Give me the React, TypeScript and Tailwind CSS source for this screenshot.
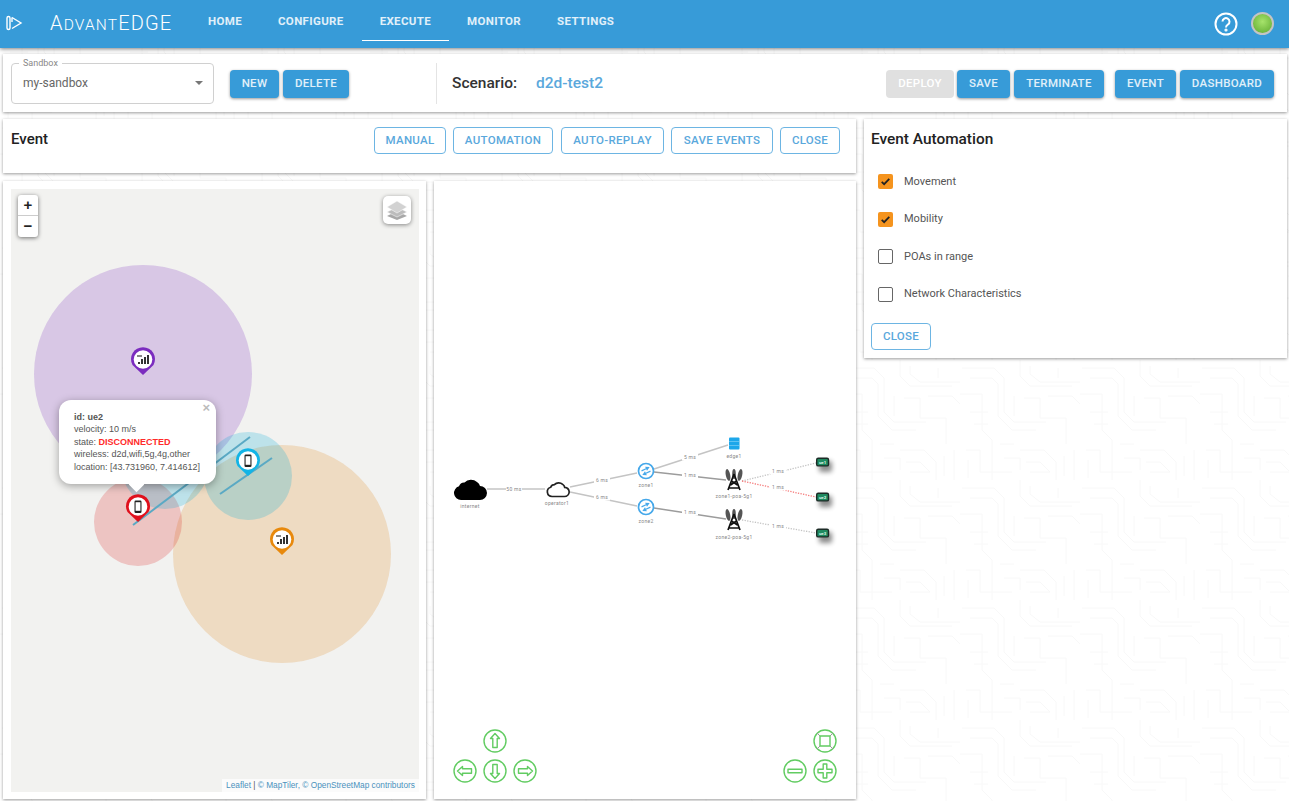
function Solid({ label, className = "" }: { label: string; className?: string }) {
  return (
    <button className={`h-[28px] rounded-[4px] bg-[#379bd8] text-[11.5px] font-medium tracking-[0.3px] text-white/85 shadow-[0_1px_3px_rgba(0,0,0,0.4)] ${className}`}>
      {label}
    </button>
  );
}

function Outline({ label, className = "" }: { label: string; className?: string }) {
  return (
    <button className={`h-[27px] rounded-[4px] border border-[#6db5e3] bg-white text-[11.5px] font-medium tracking-[0.3px] text-[#5aa8dc] ${className}`}>
      {label}
    </button>
  );
}

function Check({ label, on }: { label: string; on?: boolean }) {
  return (
    <div className="flex h-[37.5px] items-center">
      <span className={`mr-[11px] ml-[7px] flex h-[15px] w-[15px] items-center justify-center rounded-[2px] ${on ? "bg-[#f5941e]" : "border border-[#666] bg-white"}`}>
        {on && (
          <svg viewBox="0 0 24 24" className="h-[13px] w-[13px]" fill="none" stroke="#222" strokeWidth="3.2">
            <path d="M5 12.5l4.5 4.5L19 7" />
          </svg>
        )}
      </span>
      <span className="text-[11px] text-[#555]">{label}</span>
    </div>
  );
}

function Pin({ x, y, color, kind }: { x: number; y: number; color: string; kind: "phone" | "signal" }) {
  return (
    <g>
      <path d={`M${x - 10.5} ${y + 5} A12 12 0 1 1 ${x + 10.5} ${y + 5} L${x} ${y + 15} Z`} fill={color} />
      <circle cx={x} cy={y - 0.5} r="9.3" fill="white" />
      {kind === "phone" ? (
        <g>
          <rect x={x - 3.5} y={y - 6.5} width="7" height="12.5" rx="1.2" fill="#222" />
          <rect x={x - 2.4} y={y - 4.8} width="4.8" height="8.6" fill="white" />
        </g>
      ) : (
        <g fill="#333">
          <rect x={x - 5} y={y + 2} width="2" height="2" />
          <rect x={x - 2} y={y - 1} width="2" height="5" />
          <rect x={x + 1} y={y - 3} width="2" height="7" />
          <rect x={x + 4} y={y - 5} width="2" height="9" />
          <rect x={x - 6} y={y - 5} width="5" height="2" fill="#888" />
        </g>
      )}
    </g>
  );
}

function MapCanvas() {
  return (
    <svg viewBox="11 189 408 603" className="absolute inset-0 h-full w-full">
      <rect x="11" y="189" width="408" height="603" fill="#f2f2f0" />
      <circle cx="143" cy="374" r="109" fill="#7b2cbf" fillOpacity="0.22" />
      <circle cx="282" cy="554" r="109" fill="#e08a1e" fillOpacity="0.22" />
      <circle cx="138" cy="522" r="44" fill="#dc2020" fillOpacity="0.22" />
      <circle cx="165" cy="465" r="44" fill="#00a8d8" fillOpacity="0.22" />
      <circle cx="248" cy="476" r="44" fill="#00a8d8" fillOpacity="0.22" />
      <path d="M133 525L250 437" stroke="#5aa9c4" strokeWidth="2" />
      <path d="M220 494L272 458" stroke="#5aa9c4" strokeWidth="2" />
      <Pin x={143} y={360} color="#7b2cbf" kind="signal" />
      <Pin x={282} y={540} color="#e8890c" kind="signal" />
      <Pin x={248} y={461} color="#12b4e6" kind="phone" />
      <Pin x={138} y={507} color="#e0101c" kind="phone" />
    </svg>
  );
}

function Popup() {
  return (
    <div className="absolute left-[48px] top-[211px] h-[84px] w-[157px] rounded-[12px] bg-white pl-[15px] pt-[11px] text-[9px] leading-[12.4px] text-[#555] shadow-[0_2px_8px_rgba(0,0,0,0.35)] [font-family:'Liberation_Sans',sans-serif]">
      <span className="absolute right-[6px] top-[1px] text-[13px] font-bold leading-[14px] text-[#bbb]">×</span>
      <div className="font-bold">id: ue2</div>
      <div>velocity: 10 m/s</div>
      <div>
        state: <span className="font-bold text-[#ff2a2a]">DISCONNECTED</span>
      </div>
      <div>wireless: d2d,wifi,5g,4g,other</div>
      <div>location: [43.731960, 7.414612]</div>
      <span className="absolute left-[72px] top-[79px] h-[11px] w-[11px] rotate-45 bg-white" />
    </div>
  );
}

function Label({ x, y, children, bg }: { x: number; y: number; children: string; bg?: boolean }) {
  return (
    <g>
      {bg && <rect x={x - 8} y={y - 3.5} width="16" height="7" fill="white" />}
      <text x={x} y={y + 1.8} textAnchor="middle" fontSize="5" fill="#888" letterSpacing="0.3">
        {children}
      </text>
    </g>
  );
}

function Tower({ x, y }: { x: number; y: number }) {
  return (
    <g>
      <g fill="#555">
        <ellipse cx={x - 6} cy={y - 5} rx="2.2" ry="6" transform={`rotate(-12 ${x - 6} ${y - 5})`} />
        <ellipse cx={x + 6} cy={y - 5} rx="2.2" ry="6" transform={`rotate(12 ${x + 6} ${y - 5})`} />
        <ellipse cx={x} cy={y - 6} rx="1.8" ry="5" />
      </g>
      <path
        d={`M${x} ${y - 6}L${x - 6} ${y + 10}M${x} ${y - 6}L${x + 6} ${y + 10}M${x - 2.5} ${y + 1}L${x + 3.5} ${y + 5}M${x + 2.5} ${y + 1}L${x - 3.5} ${y + 5}M${x - 5} ${y + 8}L${x + 5} ${y + 8}`}
        stroke="#111"
        strokeWidth="1.7"
        fill="none"
      />
    </g>
  );
}

function Zone({ x, y }: { x: number; y: number }) {
  return (
    <g>
      <circle cx={x} cy={y} r="7.5" fill="white" stroke="#45a8ea" strokeWidth="1.7" />
      <g transform={`rotate(-25 ${x} ${y})`}>
        <path d={`M${x - 4} ${y - 2}H${x + 1}M${x + 4} ${y + 2}H${x - 1}`} stroke="#45a8ea" strokeWidth="1.3" />
        <path d={`M${x + 5} ${y - 2}L${x + 1} ${y - 4.2}V${y + 0.2}ZM${x - 5} ${y + 2}L${x - 1} ${y + 4.2}V${y - 0.2}Z`} fill="#45a8ea" />
      </g>
    </g>
  );
}

function Ue({ y, name }: { y: number; name: string }) {
  return (
    <g>
      <rect x="819" y={y - 1} width="13" height="11" rx="2" fill="#000" opacity="0.45" filter="url(#ue-shadow)" />
      <rect x="816.7" y={y - 3.7} width="11.8" height="7.6" rx="1.5" fill="#1f8a5f" stroke="#1c2b26" strokeWidth="1.4" />
      <text x="822.6" y={y + 1.6} textAnchor="middle" fontSize="4.4" fontWeight="700" fill="#d8f5e6">
        {name}
      </text>
    </g>
  );
}

function Ctrl({ x, y, d }: { x: number; y: number; d: string }) {
  return (
    <g fill="none" stroke="#62cc62" strokeWidth="1.4">
      <circle cx={x} cy={y} r="11" fill="white" />
      <path d={d} transform={`translate(${x} ${y})`} strokeLinejoin="round" />
    </g>
  );
}

function NetworkCanvas() {
  return (
    <svg viewBox="434 181 422 618" className="absolute inset-0 h-full w-full [font-family:Roboto,sans-serif]">
      <defs>
        <filter id="ue-shadow" x="-60%" y="-60%" width="220%" height="220%">
          <feGaussianBlur stdDeviation="2.5" />
        </filter>
      </defs>
      <g stroke="#c4c4c4" strokeWidth="1.5" fill="none">
        <path d="M487 489L545 489" />
        <path d="M570 487L637 473" />
        <path d="M570 492L637 506" />
        <path d="M654 469L728 445" />
      </g>
      <g stroke="#9c9c9c" strokeWidth="1.5" fill="none">
        <path d="M654 472L726 480" />
        <path d="M654 508L726 519" />
      </g>
      <path d="M742 481L816 463" stroke="#c4c4c4" strokeWidth="1.3" strokeDasharray="1.3 1.3" />
      <path d="M742 481L816 497" stroke="#f57a7a" strokeWidth="1.3" strokeDasharray="1.3 1.3" />
      <path d="M742 520L816 533" stroke="#c4c4c4" strokeWidth="1.3" strokeDasharray="1.3 1.3" />
      <path d="M461 500a7 7 0 0 1-2-13.7a5.5 5.5 0 0 1 5.5-3.8a9 9 0 0 1 12.5-.5a6 6 0 0 1 3 4a7 7 0 0 1 7 7a7.2 7.2 0 0 1-7 7Z" fill="#000" />
      <path d="M552 496.5a4.7 4.7 0 0 1-1.3-9.2a4 4 0 0 1 3.7-2.6a6 6 0 0 1 8.3-.3a4.5 4.5 0 0 1 2 3a5 5 0 0 1 4.5 4.6a4.8 4.8 0 0 1-4.7 4.5Z" fill="white" stroke="#222" strokeWidth="1.7" />
      <Zone x={646} y={471} />
      <Zone x={646} y={507} />
      <rect x="729" y="437.5" width="10.5" height="12" rx="1" fill="#1da7ea" />
      <path d="M729 441.5h10.5M729 445.5h10.5" stroke="#8fd6f7" strokeWidth="0.6" />
      <Tower x={734} y={480} />
      <Tower x={734} y={520} />
      <Ue y={462} name="ue1" />
      <Ue y={497} name="ue2" />
      <Ue y={533} name="ue3" />
      <Label x={470} y={506}>internet</Label>
      <Label x={557} y={503}>operator1</Label>
      <Label x={646} y={485}>zone1</Label>
      <Label x={646} y={521}>zone2</Label>
      <Label x={734} y={456}>edge1</Label>
      <Label x={734} y={496}>zone1-poa-5g1</Label>
      <Label x={734} y={537}>zone2-poa-5g1</Label>
      <Label x={514} y={489} bg>50 ms</Label>
      <Label x={602} y={480} bg>6 ms</Label>
      <Label x={602} y={497} bg>6 ms</Label>
      <Label x={690} y={457} bg>5 ms</Label>
      <Label x={690} y={475} bg>1 ms</Label>
      <Label x={690} y={512} bg>1 ms</Label>
      <Label x={778} y={471} bg>1 ms</Label>
      <Label x={778} y={487} bg>1 ms</Label>
      <Label x={778} y={526} bg>1 ms</Label>
      <Ctrl x={495} y={741} d="M0 -7.5L4.5 -2.5H2.2V6.5H-2.2V-2.5H-4.5Z" />
      <Ctrl x={495} y={771} d="M0 7.5L4.5 2.5H2.2V-6.5H-2.2V2.5H-4.5Z" />
      <Ctrl x={465} y={771} d="M-7.5 0L-2.5 -4.5V-2.2H6.5V2.2H-2.5V4.5Z" />
      <Ctrl x={525} y={771} d="M7.5 0L2.5 -4.5V-2.2H-6.5V2.2H2.5V4.5Z" />
      <Ctrl x={795} y={771} d="M-7 -1.8H7V1.8H-7Z" />
      <Ctrl x={825} y={771} d="M-1.8 -7H1.8V-1.8H7V1.8H1.8V7H-1.8V1.8H-7V-1.8H-1.8Z" />
      <Ctrl x={825} y={741} d="M-5 -5H5V5H-5Z" />
      <path d="M817 733L820 736M833 733L830 736M817 749L820 746M833 749L830 746" stroke="#999" strokeWidth="1" />
    </svg>
  );
}

function CircuitBackground() {
  return (
    <svg className="absolute inset-0 h-full w-full">
      <defs>
        <pattern id="circuit" width="120" height="120" patternUnits="userSpaceOnUse">
          <g fill="none" stroke="#f8f8f8" strokeWidth="1">
            <path d="M2 8H34L44 18V52L54 62H86M10 18H32L38 24V56L52 70H76M0 34H22V70L32 80V120" />
            <path d="M60 0V16L70 26H112M70 6V14L80 22H120M88 36H112L120 44M64 38H80V58H106V84" />
            <path d="M6 90H20V112H52M60 90H84L96 102V120M66 102H80L90 112H70M104 96V116M114 90V120" />
            <path d="M10 52H28M14 64H28M54 36V56M44 98H60V110M98 8V18M8 100V118M40 84H54" />
          </g>
        </pattern>
      </defs>
      <rect width="100%" height="100%" fill="url(#circuit)" />
    </svg>
  );
}

export default function App() {
  return (
    <div className="relative h-[801px] w-full overflow-hidden bg-white [font-family:Roboto,sans-serif]">
      <CircuitBackground />
      <div className="relative">
        {/* Top bar */}
        <header className="flex h-[48px] items-center bg-[#379bd8] text-white shadow-[0_1px_4px_rgba(0,0,0,0.5)]">
          <div className="flex w-[190px] items-center pb-[2px]">
            <svg viewBox="0 0 18 18" className="ml-[5px] mr-[27px] h-[18px] w-[18px]" fill="none" stroke="white" strokeWidth="1.4">
              <path d="M2 4V14a1.5 1.5 0 0 0 3 0V4a1.5 1.5 0 0 0-3 0Z" />
              <path d="M7 3.5L16 9L7 14.5" />
              <path d="M7 3.5V8" />
            </svg>
            <span className="whitespace-nowrap font-light leading-none tracking-[1.15px]">
              <span className="text-[20px]">A</span>
              <span className="text-[15.5px]">DVANT</span>
              <span className="text-[20px]">EDGE</span>
            </span>
          </div>
          <nav className="flex h-full text-[11.5px] font-bold tracking-[0.35px]">
            {["HOME", "CONFIGURE", "EXECUTE", "MONITOR", "SETTINGS"].map((t) => (
              <div key={t} className={`mb-[7px] flex items-center border-b px-[18px] pt-[3px] text-white/85 ${t === "EXECUTE" ? "border-white" : "border-transparent"}`}>
                {t}
              </div>
            ))}
          </nav>
          <div className="ml-auto mr-[15px] flex items-center gap-[13px]">
            <svg viewBox="0 0 24 24" className="h-[24px] w-[24px]" fill="none" stroke="white" strokeWidth="2">
              <circle cx="12" cy="12" r="10.5" />
              <path d="M8.5 9.5a3.5 3.5 0 1 1 5.5 3c-1.3 1-2 1.5-2 3" />
              <circle cx="12" cy="18" r="0.6" fill="white" />
            </svg>
            <span className="mb-[2px] h-[23px] w-[23px] rounded-full border-2 border-[#c4c4c4] bg-[radial-gradient(circle_at_50%_40%,#a6e36b,#5da82e)]" />
          </div>
        </header>

        {/* Sandbox and scenario toolbar */}
        <section className="mx-[2px] ml-[3px] mt-[6px] flex h-[58px] items-center bg-white pl-[8px] pr-[13px] shadow-[0_1px_3px_rgba(0,0,0,0.4)]">
          <div className="relative flex h-[41px] w-[203px] items-center justify-between rounded-[4px] border border-[#d0d0d0] px-[11px] text-[12px] text-[#666]">
            <span className="absolute left-[7px] top-[-6px] bg-white px-[4px] text-[9px] leading-[10px] text-[#888]">Sandbox</span>
            my-sandbox
            <span className="mr-[-1px] h-0 w-0 border-x-[4px] border-t-[4px] border-x-transparent border-t-[#777]" />
          </div>
          <Solid label="NEW" className="ml-[16px] mt-[1px] w-[49px]" />
          <Solid label="DELETE" className="ml-[4px] mt-[1px] w-[66px]" />
          <div className="ml-[87px] h-[41px] w-px bg-[#e4e4e4]" />
          <span className="ml-[15px] mt-[1px] text-[15.5px] font-medium text-[#333]">Scenario:</span>
          <span className="ml-[19px] mt-[1px] text-[15.5px] font-medium text-[#5aa8dc]">d2d-test2</span>
          <div className="ml-auto mt-[1px] flex">
            <button className="h-[28px] w-[68px] rounded-[4px] bg-[#e0e0e0] text-[11.5px] font-medium tracking-[0.3px] text-white">DEPLOY</button>
            <Solid label="SAVE" className="ml-[3px] w-[53px]" />
            <Solid label="TERMINATE" className="ml-[4px] w-[90px]" />
            <Solid label="EVENT" className="ml-[11px] w-[61px]" />
            <Solid label="DASHBOARD" className="ml-[4px] w-[94px]" />
          </div>
        </section>

        <div className="ml-[3px] mr-[2px] mt-[7px] flex items-start gap-[8px]">
          <div className="w-[853px] shrink-0">
            {/* Event bar */}
            <section className="flex h-[54px] items-start justify-between bg-white pl-[8px] pr-[16px] pt-[8px] shadow-[0_1px_3px_rgba(0,0,0,0.4)]">
              <h2 className="mt-[1px] text-[15px] font-medium text-[#222]">Event</h2>
              <div className="flex">
                <Outline label="MANUAL" className="w-[72px]" />
                <Outline label="AUTOMATION" className="ml-[7px] w-[100px]" />
                <Outline label="AUTO-REPLAY" className="ml-[8px] w-[103px]" />
                <Outline label="SAVE EVENTS" className="ml-[7px] w-[102px]" />
                <Outline label="CLOSE" className="ml-[7px] w-[60px]" />
              </div>
            </section>

            <div className="mt-[8px] flex gap-[8px]">
              {/* Map */}
              <section className="h-[618px] w-[423px] bg-white p-[8px] shadow-[0_1px_3px_rgba(0,0,0,0.4)]">
                <div className="relative h-[603px] w-[408px] overflow-hidden">
                  <MapCanvas />
                  <Popup />
                  <div className="absolute left-[7px] top-[6px] w-[20px] rounded-[3px] bg-white text-center text-[#222] shadow-[0_1px_4px_rgba(0,0,0,0.55)] [font-family:'Liberation_Sans',sans-serif]">
                    <div className="h-[21px] border-b border-[#ccc] text-[15px] font-bold leading-[20px]">+</div>
                    <div className="h-[21px] text-[15px] font-bold leading-[20px]">−</div>
                  </div>
                  <div className="absolute left-[372px] top-[7px] flex h-[28px] w-[28px] items-center justify-center rounded-[5px] bg-white shadow-[0_1px_4px_rgba(0,0,0,0.45)]">
                    <svg viewBox="0 0 22 22" className="h-[22px] w-[22px]">
                      <path d="M11 12L1 17L11 21L21 17Z" fill="#a8a8a8" />
                      <path d="M11 8L1 13L11 18L21 13Z" fill="#bcbcbc" stroke="white" strokeWidth="0.5" />
                      <path d="M11 2L1 8L11 14L21 8Z" fill="#d2d2d2" stroke="white" strokeWidth="0.5" />
                    </svg>
                  </div>
                  <div className="absolute bottom-0 right-0 flex h-[13px] w-[197px] items-center justify-center whitespace-nowrap bg-white/70 text-[8.3px] text-[#555] [font-family:'Liberation_Sans',sans-serif]">
                    <span className="text-[#4a92bd]">Leaflet</span>
                    <span>&nbsp;|&nbsp;</span>
                    <span className="text-[#4a92bd]">© MapTiler, © OpenStreetMap contributors</span>
                  </div>
                </div>
              </section>

              {/* Network graph */}
              <section className="relative h-[618px] w-[422px] bg-white shadow-[0_1px_3px_rgba(0,0,0,0.4)]">
                <NetworkCanvas />
              </section>
            </div>
          </div>

          {/* Event automation */}
          <section className="h-[239px] flex-1 bg-white pl-[7px] pt-[9px] shadow-[0_1px_3px_rgba(0,0,0,0.4)]">
            <h2 className="text-[15.4px] font-medium text-[#222]">Event Automation</h2>
            <div className="mt-[12px]">
              <Check label="Movement" on />
              <Check label="Mobility" on />
              <Check label="POAs in range" />
              <Check label="Network Characteristics" />
            </div>
            <Outline label="CLOSE" className="mt-[10px] w-[60px]" />
          </section>
        </div>
      </div>
    </div>
  );
}
